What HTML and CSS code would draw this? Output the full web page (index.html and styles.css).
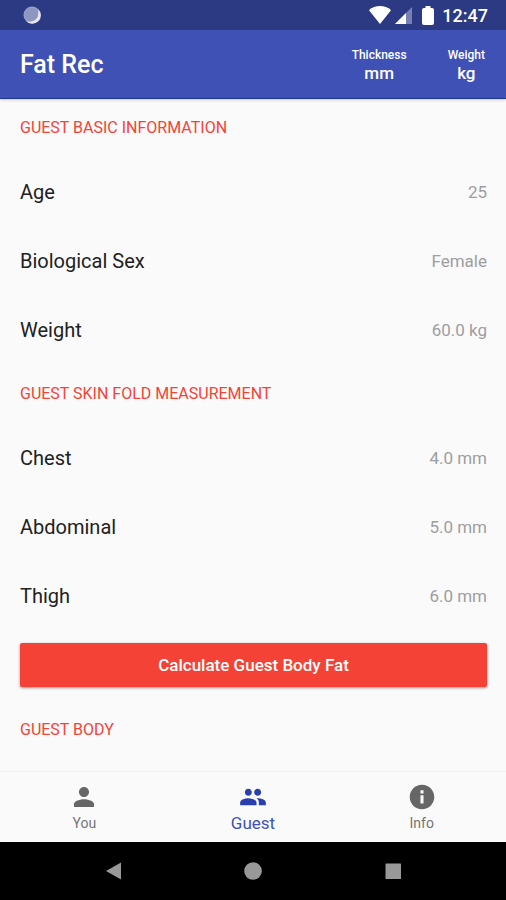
FILE: index.html
```html
<!DOCTYPE html>
<html lang="en">
<head>
<meta charset="utf-8">
<meta name="viewport" content="width=device-width, initial-scale=1">
<title>Fat Rec</title>
<link rel="stylesheet" href="styles.css">
</head>
<body>
<div class="status">
  <svg width="18" height="18" viewBox="0 0 18 18"><circle cx="9" cy="9" r="8.500" fill="#969dc6"/><path d="M15 3a8.500 8.500 0 1 1-12 12c8 3 14-4 12-12Z" fill="#e4e6f2"/><circle cx="8.500" cy="8.500" r="6.500" fill="#8e95bf"/></svg>
  <div class="status-right">
    <svg width="22" height="18" viewBox="0 0 22 18"><path d="M11 18 0 4.200C6-1.400 16-1.400 22 4.200Z" fill="#fff"/></svg>
    <svg width="17" height="17" viewBox="0 0 17 17"><path d="M0 17 17 0V17Z" fill="#7680b5"/><path d="M0 17 11 6V17Z" fill="#fff"/></svg>
    <svg class="battery" width="12" height="19" viewBox="0 0 12 19"><path d="M3.500 0h5v2H10q2 0 2 2v13q0 2-2 2H2q-2 0-2-2V4q0-2 2-2h1.500Z" fill="#fff"/></svg>
    <span>12:47</span>
  </div>
</div>
<header class="bar">
  <h1>Fat Rec</h1>
  <button class="unit"><small>Thickness</small><b>mm</b></button>
  <button class="unit"><small>Weight</small><b>kg</b></button>
</header>
<main>
  <h2>GUEST BASIC INFORMATION</h2>
  <dl>
    <div class="row"><dt>Age</dt><dd>25</dd></div>
    <div class="row"><dt>Biological Sex</dt><dd>Female</dd></div>
    <div class="row"><dt>Weight</dt><dd>60.0 kg</dd></div>
  </dl>
  <h2>GUEST SKIN FOLD MEASUREMENT</h2>
  <dl>
    <div class="row"><dt>Chest</dt><dd>4.0 mm</dd></div>
    <div class="row"><dt>Abdominal</dt><dd>5.0 mm</dd></div>
    <div class="row"><dt>Thigh</dt><dd>6.0 mm</dd></div>
  </dl>
  <button class="calculate">Calculate Guest Body Fat</button>
  <h2>GUEST BODY</h2>
</main>
<nav class="tabs">
  <a href="#you"><svg width="28" height="28" viewBox="0 0 24 24"><path d="M12 12c2.390 0 4.300-1.910 4.300-4.300S14.390 3.400 12 3.400 7.700 5.310 7.700 7.700 9.610 12 12 12zm0 2c-2.870 0-8.600 1.340-8.600 4.100v2.500h17.200v-2.500c0-2.760-5.730-4.100-8.600-4.100z"/></svg><span>You</span></a>
  <a href="#guest" class="active" aria-current="page"><svg width="28" height="28" viewBox="0 0 24 24"><path d="M16 11c1.660 0 2.990-1.340 2.990-3S17.660 5 16 5s-3 1.340-3 3 1.340 3 3 3zm-8 0c1.660 0 2.990-1.340 2.990-3S9.660 5 8 5 5 6.340 5 8s1.340 3 3 3zm0 2c-2.330 0-7 1.170-7 3.500V19h14v-2.500c0-2.330-4.670-3.500-7-3.500zm8 0c-.290 0-.620.020-.970.050 1.160.840 1.970 1.970 1.970 3.450V19h6v-2.500c0-2.330-4.670-3.500-7-3.500z"/></svg><span>Guest</span></a>
  <a href="#info"><svg width="28" height="28" viewBox="0 0 24 24"><path d="M12 1.500C6.200 1.500 1.500 6.200 1.500 12S6.200 22.500 12 22.500 22.500 17.800 22.500 12 17.800 1.500 12 1.500zm1.300 16h-2.600v-7h2.600v7zm0-8.600h-2.600V6.300h2.600v2.600z"/></svg><span>Info</span></a>
</nav>
<div class="system">
  <button aria-label="Back"><svg width="20" height="20" viewBox="0 0 20 20"><path d="M3 10 18 1.500V18.500Z"/></svg></button>
  <button aria-label="Home"><svg width="20" height="20" viewBox="0 0 20 20"><circle cx="10" cy="10" r="8.800"/></svg></button>
  <button aria-label="Recent apps"><svg width="20" height="20" viewBox="0 0 20 20"><rect x="2.500" y="2.500" width="15.500" height="15.500" rx=".5"/></svg></button>
</div>
</body>
</html>
```
FILE: styles.css
```css
* { box-sizing: border-box; }
body {
  margin: 0;
  min-height: 100vh;
  display: flex;
  flex-direction: column;
  background: #fafafa;
  color: #212121;
  font-family: Roboto, "Liberation Sans", sans-serif;
}
button { font-family: inherit; border: 0; padding: 0; cursor: pointer; }
h1, h2, dl, dd { margin: 0; }
svg { display: block; }
.status {
  height: 30px;
  padding: 0 18px 0 23px;
  display: flex;
  align-items: center;
  justify-content: space-between;
  background: #2c3a83;
  color: #fff;
}
.status-right { display: flex; align-items: center; gap: 4px; font-size: 18px; font-weight: 500; }
.battery { margin: 0 4px 0 6px; }
.bar {
  height: 68px;
  padding: 2px 21px 0 20px;
  display: flex;
  align-items: center;
  gap: 41px;
  background: #3f51b5;
  color: #fff;
  box-shadow: 0 1px 0 #1f3596, 0 2px 3px rgba(0, 0, 0, 0.2);
}
h1 { flex: 1; font-size: 25px; font-weight: 500; line-height: 32px; }
.unit {
  display: flex;
  flex-direction: column;
  align-items: center;
  background: none;
  color: inherit;
}
.unit small { font-size: 12px; font-weight: 500; line-height: 16px; }
.unit b { font-size: 17px; font-weight: 500; line-height: 20px; }
main { flex: 1; padding: 0 19px 0 20px; }
h2 {
  height: 59px;
  color: #f44336;
  font-size: 16px;
  font-weight: 400;
  line-height: 60px;
}
.row {
  height: 69px;
  display: flex;
  align-items: center;
  justify-content: space-between;
}
dt { font-size: 20px; }
dd { color: #9e9e9e; font-size: 17px; }
.calculate {
  width: 100%;
  height: 44px;
  margin: 13px 0;
  display: block;
  border-radius: 2px;
  background: #f44336;
  color: #fff;
  font-size: 17px;
  font-weight: 500;
  box-shadow: 0 1px 3px rgba(0, 0, 0, 0.4);
}
.tabs {
  height: 71px;
  display: flex;
  border-top: 1px solid #eee;
}
.tabs a {
  flex: 1;
  padding-top: 11px;
  display: flex;
  flex-direction: column;
  align-items: center;
  color: #757575;
  font-size: 14px;
  line-height: 24px;
  text-decoration: none;
}
.tabs svg { fill: #666; }
.tabs .active { color: #3f51b5; font-size: 17px; }
.tabs .active svg { fill: #2a3fae; }
.system {
  height: 58px;
  padding: 0 43px;
  display: flex;
  align-items: center;
  background: #000;
}
.system button { flex: 1; display: flex; justify-content: center; background: none; }
.system svg { fill: #999; }
```
